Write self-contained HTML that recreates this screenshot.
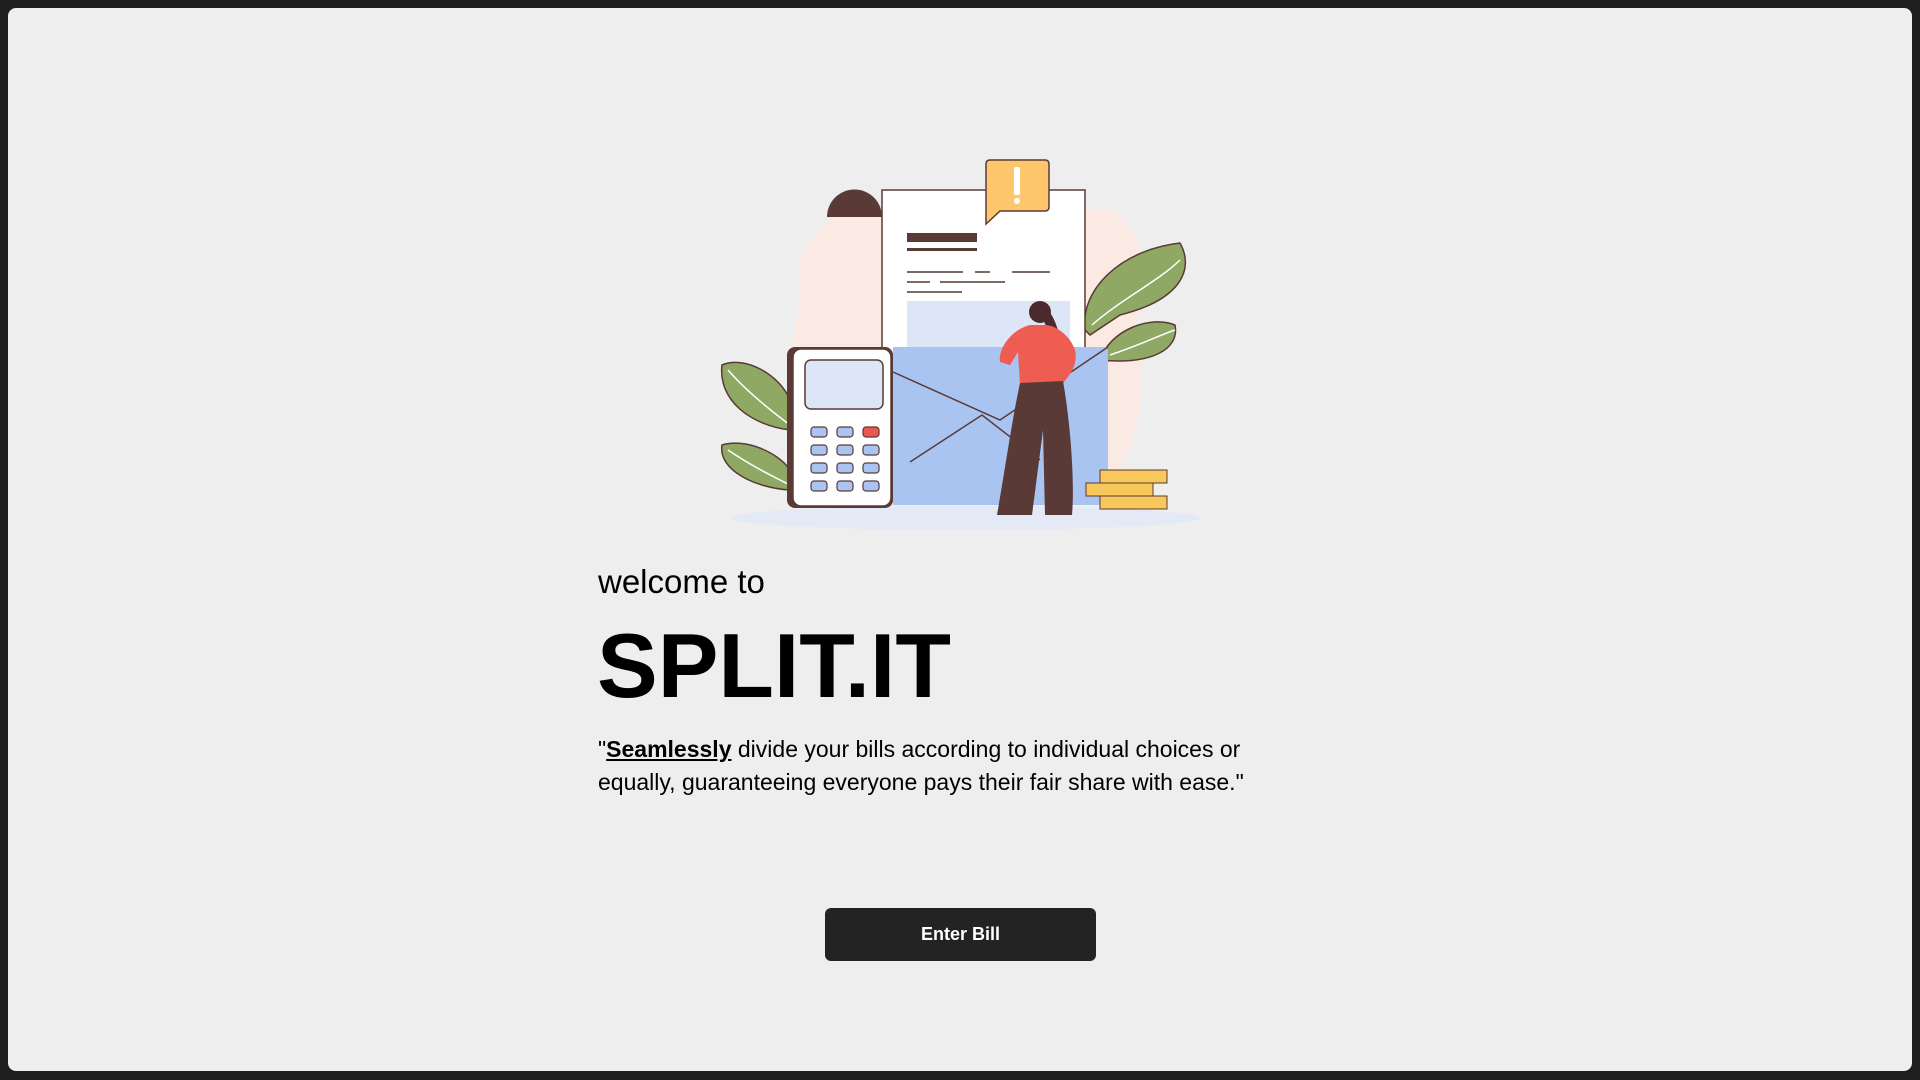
<!DOCTYPE html>
<html><head><meta charset="utf-8"><style>
html,body{margin:0;padding:0;width:1920px;height:1080px;background:#1e1e1e;overflow:hidden}
.frame{position:absolute;left:8px;top:8px;width:1904px;height:1063px;background:#eeeeee;border-radius:8px}
.t{position:absolute;font-family:"Liberation Sans",sans-serif;color:#000;white-space:nowrap;transform-origin:left top}
.btn{position:absolute;left:825px;top:908px;width:271px;height:53px;background:#232323;border-radius:6px;color:#fff;font:bold 18px "Liberation Sans",sans-serif;display:flex;align-items:center;justify-content:center}
</style></head><body>
<div class="frame"></div>
<svg style="position:absolute;left:0;top:0" width="1920" height="1080" viewBox="0 0 1920 1080">
<ellipse cx="965" cy="518" rx="235" ry="12" fill="#e3e9f5"/>
<path d="M800 300 C790 240 830 215 860 210 L1110 210 C1150 230 1150 290 1135 330 C1150 380 1140 430 1120 470 L800 470 C780 420 790 360 800 300Z" fill="#fbe9e3"/>
<path d="M790 430 C750 425 718 400 722 365 C745 355 780 375 790 400Z" fill="#8fa863" stroke="#5a3a36" stroke-width="1.5"/>
<path d="M790 490 C755 488 718 470 722 445 C745 438 778 452 790 470Z" fill="#8fa863" stroke="#5a3a36" stroke-width="1.5"/>
<path d="M728 370 C745 390 770 410 790 425 M728 450 C750 465 770 475 790 485" stroke="#fff" fill="none" stroke-width="1.5"/>
<path d="M1085 330 C1080 290 1120 250 1180 243 C1195 270 1180 300 1120 315 L1090 335Z" fill="#8fa863" stroke="#5a3a36" stroke-width="1.5"/>
<path d="M1100 360 C1110 330 1150 315 1175 325 C1180 350 1150 365 1100 360Z" fill="#8fa863" stroke="#5a3a36" stroke-width="1.5"/>
<path d="M1092 325 C1120 300 1160 280 1180 260 M1110 355 C1140 345 1160 335 1175 330" stroke="#fff" fill="none" stroke-width="1.5"/>
<rect x="882" y="190" width="203" height="260" fill="#fff" stroke="#5a3a36" stroke-width="1.5"/>
<path d="M827 217 A27 27 0 0 1 882 217 Z" fill="#5a3a36"/>
<rect x="907" y="233" width="70" height="9" fill="#5a3a36"/>
<rect x="907" y="248" width="70" height="3" fill="#5a3a36"/>
<g stroke="#7a6a68" stroke-width="2"><line x1="907" y1="272" x2="963" y2="272"/><line x1="975" y1="272" x2="990" y2="272"/><line x1="1012" y1="272" x2="1050" y2="272"/><line x1="907" y1="282" x2="930" y2="282"/><line x1="940" y1="282" x2="1005" y2="282"/><line x1="907" y1="292" x2="962" y2="292"/></g>
<rect x="907" y="301" width="163" height="57" fill="#dce6f7"/>
<rect x="893" y="347" width="215" height="158" fill="#aac4f2"/>
<path d="M893 372 L1000 420 L1108 347" fill="none" stroke="#5a3a36" stroke-width="1.5"/>
<path d="M910 462 L982 415 L1040 460" fill="none" stroke="#5a3a36" stroke-width="1.5"/>
<rect x="787" y="347" width="106" height="161" rx="8" fill="#5a3a36"/>
<rect x="793" y="349" width="98" height="157" rx="8" fill="#fff" stroke="#5a3a36" stroke-width="1.5"/>
<rect x="805" y="360" width="78" height="49" rx="6" fill="#dce6f7" stroke="#5a3a36" stroke-width="1.5"/>
<g fill="#aac4f2" stroke="#5a3a36" stroke-width="1.2">
<rect x="811" y="427" width="16" height="10" rx="3"/><rect x="837" y="427" width="16" height="10" rx="3"/><rect x="863" y="427" width="16" height="10" rx="3" fill="#e85850"/>
<rect x="811" y="445" width="16" height="10" rx="3"/><rect x="837" y="445" width="16" height="10" rx="3"/><rect x="863" y="445" width="16" height="10" rx="3"/>
<rect x="811" y="463" width="16" height="10" rx="3"/><rect x="837" y="463" width="16" height="10" rx="3"/><rect x="863" y="463" width="16" height="10" rx="3"/>
<rect x="811" y="481" width="16" height="10" rx="3"/><rect x="837" y="481" width="16" height="10" rx="3"/><rect x="863" y="481" width="16" height="10" rx="3"/></g>
<path d="M990 160 H1045 Q1049 160 1049 164 V207 Q1049 211 1045 211 H1000 L986 224 V164 Q986 160 990 160Z" fill="#fec76c" stroke="#5a3a36" stroke-width="1.5"/>
<rect x="1014" y="167" width="6" height="28" rx="2" fill="#fff"/><circle cx="1017" cy="201" r="3" fill="#fff"/>
<g fill="#f8c85a" stroke="#5a3a36" stroke-width="1"><rect x="1100" y="470" width="67" height="13"/><rect x="1086" y="483" width="67" height="13"/><rect x="1100" y="496" width="67" height="13"/></g>
<path d="M1036 305 C1050 305 1056 320 1062 345 C1058 350 1050 345 1048 330Z" fill="#4a2a2e"/>
<circle cx="1040" cy="312" r="11" fill="#4a2a2e"/>
<path d="M1030 325 C1010 330 998 350 1000 362 L1010 365 L1018 352 L1020 385 L1063 383 C1070 375 1078 365 1075 350 C1070 335 1055 325 1045 325Z" fill="#ef5d52"/>
<path d="M1020 383 L1063 381 C1070 420 1075 480 1072 515 L1045 515 L1043 430 L1032 515 L997 515 C1005 470 1012 420 1020 383Z" fill="#5a3a36"/>
</svg>
<div class="t" style="left:598px;top:563px;font-size:33px">welcome to</div>
<div class="t" style="left:597px;top:615px;font-size:91px;font-weight:bold">SPLIT.IT</div>
<div class="t" style="left:598px;top:733px;font-size:23px;line-height:33px">"<b style="text-decoration:underline">Seamlessly</b> divide your bills according to individual choices or<br>equally, guaranteeing everyone pays their fair share with ease."</div>
<div class="btn">Enter Bill</div>
</body></html>
